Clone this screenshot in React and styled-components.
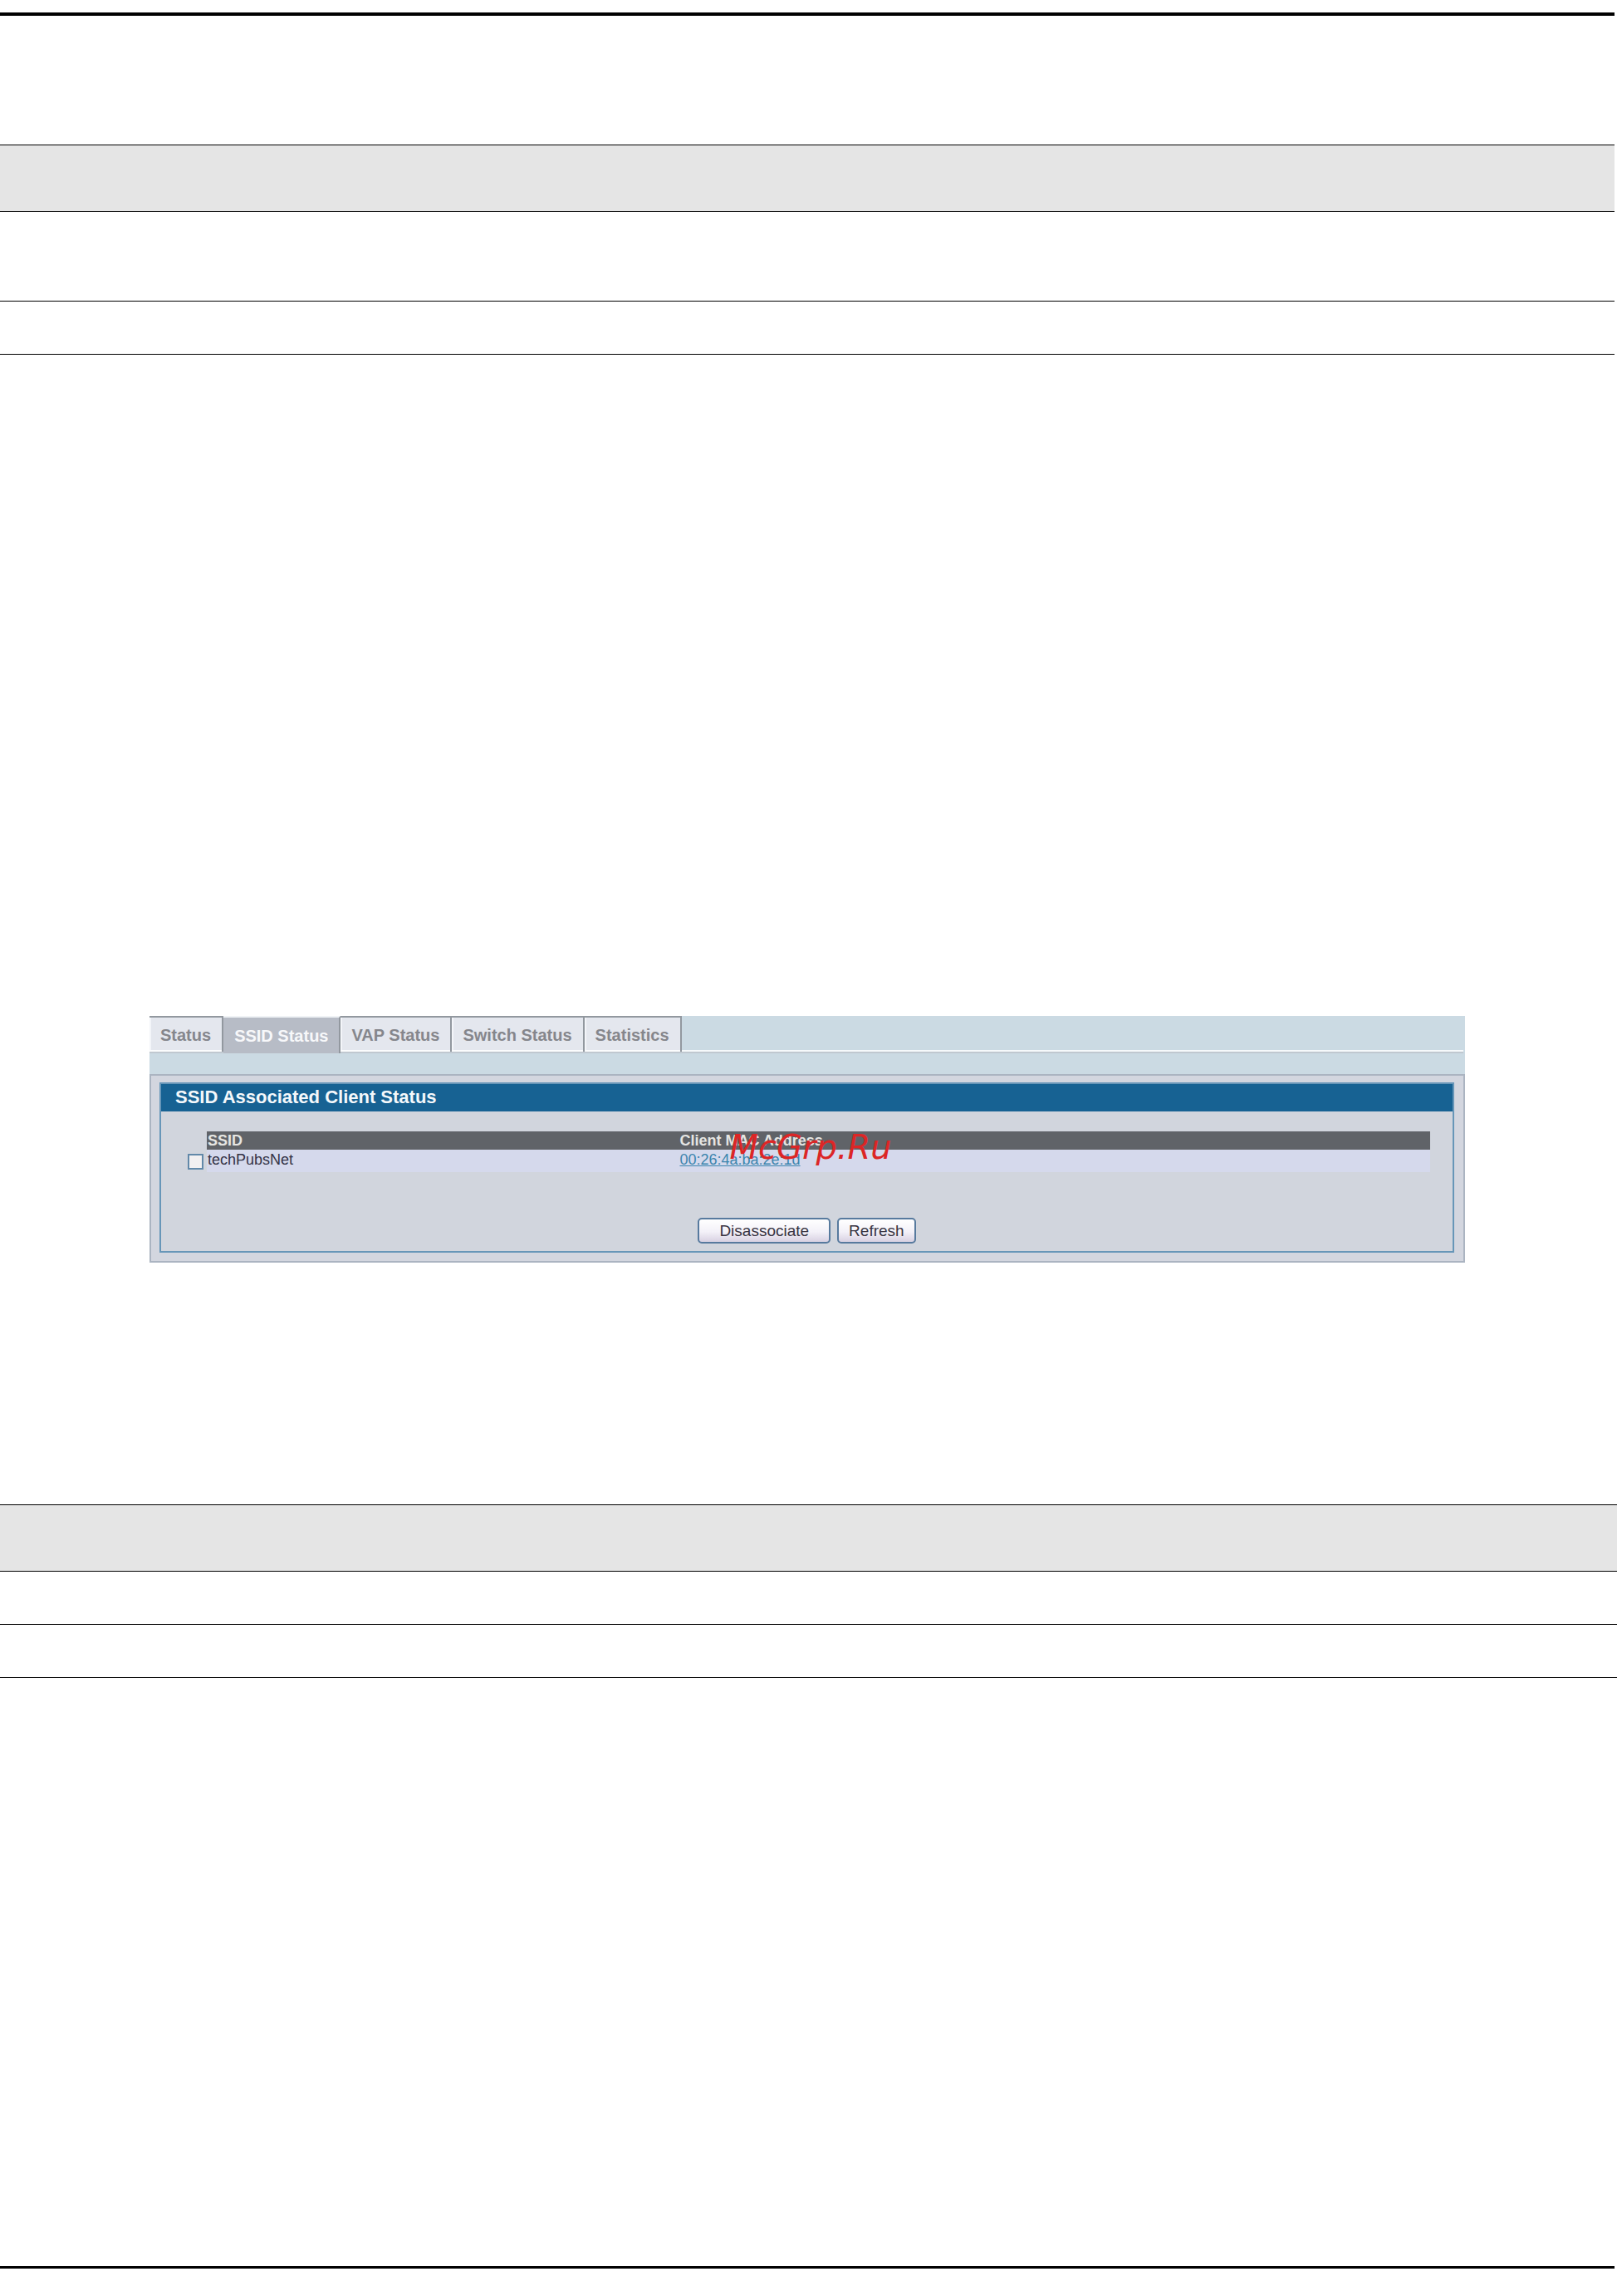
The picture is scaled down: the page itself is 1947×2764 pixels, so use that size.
import React, { useState } from 'react'
import styled, { createGlobalStyle } from 'styled-components'

const GlobalStyle = createGlobalStyle`
  body {
    margin: 0;
    background: #fff;
    font-family: 'Liberation Sans', Arial, sans-serif;
  }

  *, *::before, *::after {
    box-sizing: border-box;
  }
`

const Page = styled.main`
  display: flex;
  flex-direction: column;
  padding: 15px 0 32px;
`

const Rule = styled.hr`
  width: 100%;
  height: ${(props) => props.$weight}px;
  margin: 0;
  border: none;
  border-right: 3px solid #fff;
  background: #000;
`

const Lines = styled.section`
  margin-top: ${(props) => props.$space || 0}px;
  margin-right: ${(props) => props.$inset || 0}px;
  border-top: 1px solid #000;
`

const Line = styled.div`
  height: ${(props) => props.$height}px;
  border-bottom: 1px solid #000;
  background: ${(props) => (props.$shaded ? '#e5e5e5' : '#fff')};
`

const Footer = styled.footer`
  padding-top: 708px;
`

const Screen = styled.section`
  margin: 796px 183px 291px 180px;
  background: #cbdae3;
`

const Tabs = styled.nav`
  display: flex;
  height: 45px;
  margin-right: 2px;
  border-bottom: 2px solid #c0c8d0;
`

const Tab = styled.button`
  height: 43px;
  padding: 0 13px;
  border: solid #92989f;
  border-width: 2px 2px 0 0;
  box-shadow: inset 0 -2px #fbfcfd, inset 2px 0 #f3f5f9;
  background: #e4e7ee;
  color: #85868c;
  font: bold 20px/38px 'Liberation Sans', Arial, sans-serif;
  white-space: nowrap;

  &[aria-current='page'] {
    height: 45px;
    border-top-color: #f0f3f6;
    box-shadow: none;
    background: #b7bcc6;
    color: #f7f8fa;
  }
`

const TabFill = styled.div`
  flex: 1;
  height: 43px;
  border-bottom: 2px solid #f6f9fb;
`

const Frame = styled.div`
  margin-top: 25px;
  padding: 8px 11px 10px 10px;
  border: 2px solid #abb4c1;
  background: #d3d6df;
`

const Panel = styled.div`
  border: 2px solid #6796b8;
  background: #d1d5dd;
`

const Title = styled.h1`
  height: 33px;
  margin: 0;
  padding-left: 17px;
  background: #176293;
  color: #f4f8fb;
  font-size: 22px;
  line-height: 31px;
`

const ClientTable = styled.table`
  width: calc(100% - 59px);
  margin: 24px 27px 0 32px;
  border-collapse: collapse;
  table-layout: fixed;
  font-size: 18px;
  text-align: left;
`

const SelectCol = styled.col`
  width: 23px;
`

const SsidCol = styled.col`
  width: 38%;
`

const HeadCell = styled.th`
  position: relative;
  height: 22px;
  padding: 0 1px;
  background: #606368;
  color: #e5e5e2;
  line-height: 22px;
`

const Cell = styled.td`
  height: 27px;
  padding: 0 0 4px 1px;
  background: #d5d9ec;
  color: #343346;
  line-height: 20px;
`

const SelectCell = styled.td`
  padding: 5px 0 0;
  vertical-align: top;
`

const CheckBox = styled.input`
  appearance: none;
  display: block;
  width: 19px;
  height: 19px;
  margin: 0;
  border: 2px solid #6289a9;
  background: #f2f0f1;

  &:checked {
    background: #2c628c;
  }
`

const MacLink = styled.a`
  color: #3c85ae;
`

const Actions = styled.div`
  display: flex;
  justify-content: center;
  gap: 8px;
  padding: 55px 0 9px;
`

const Action = styled.button`
  height: 31px;
  padding: 0 ${(props) => props.$pad}px;
  border: 2px solid #577a9e;
  border-radius: 5px;
  background: linear-gradient(#fff, #f3f1f8 55%, #d8d1e2);
  color: #383442;
  font: 19px/26px 'Liberation Sans', Arial, sans-serif;
`

const Watermark = styled.span`
  position: absolute;
  top: -3px;
  left: 61px;
  color: #dc2626;
  font: italic 40px/44px 'DejaVu Sans', sans-serif;
  pointer-events: none;
`

const tabs = ['Status', 'SSID Status', 'VAP Status', 'Switch Status', 'Statistics']

const clients = [{ ssid: 'techPubsNet', mac: '00:26:4a:ba:2e:1d' }]

const App = () => {
  const [active, setActive] = useState('SSID Status')

  return (
    <>
      <GlobalStyle />
      <Page>
        <Rule $weight={4} />
        <Lines $space={155} $inset={3}>
          <Line $height={80} $shaded />
          <Line $height={108} />
          <Line $height={64} />
        </Lines>
        <Screen>
          <Tabs>
            {tabs.map((tab) => (
              <Tab
                key={tab}
                type="button"
                aria-current={tab === active ? 'page' : undefined}
                onClick={() => setActive(tab)}
              >
                {tab}
              </Tab>
            ))}
            <TabFill />
          </Tabs>
          <Frame>
            <Panel>
              <Title>SSID Associated Client Status</Title>
              <ClientTable>
                <colgroup>
                  <SelectCol />
                  <SsidCol />
                  <col />
                </colgroup>
                <thead>
                  <tr>
                    <td />
                    <HeadCell scope="col">SSID</HeadCell>
                    <HeadCell scope="col">
                      Client MAC Address
                      <Watermark>McGrp.Ru</Watermark>
                    </HeadCell>
                  </tr>
                </thead>
                <tbody>
                  {clients.map((client) => (
                    <tr key={client.mac}>
                      <SelectCell>
                        <CheckBox type="checkbox" aria-label={client.ssid} />
                      </SelectCell>
                      <Cell>{client.ssid}</Cell>
                      <Cell><MacLink href="#client">{client.mac}</MacLink></Cell>
                    </tr>
                  ))}
                </tbody>
              </ClientTable>
              <Actions>
                <Action type="button" $pad={24}>Disassociate</Action>
                <Action type="button" $pad={12}>Refresh</Action>
              </Actions>
            </Panel>
          </Frame>
        </Screen>
        <Lines>
          <Line $height={80} $shaded />
          <Line $height={64} />
          <Line $height={64} />
        </Lines>
        <Footer>
          <Rule $weight={3} />
        </Footer>
      </Page>
    </>
  )
}

export default App
